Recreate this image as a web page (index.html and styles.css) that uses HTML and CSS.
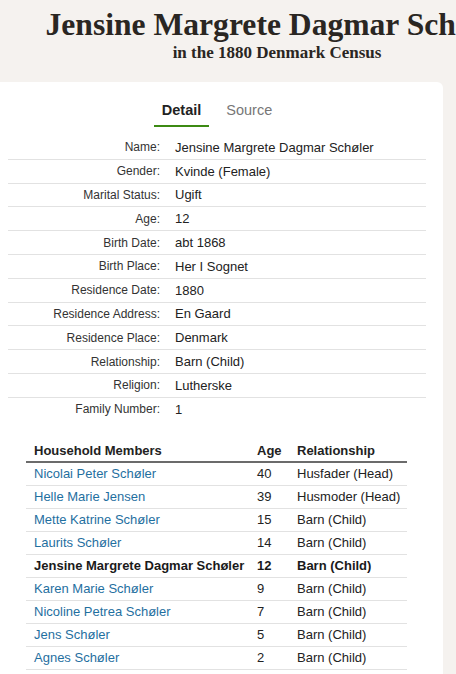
FILE: index.html
```html
<!DOCTYPE html>
<html>
<head>
<meta charset="utf-8">
<link rel="stylesheet" href="styles.css">
</head>
<body>
<header class="page-head">
  <h1 class="title">Jensine Margrete Dagmar Schøler</h1>
  <h2 class="subtitle">in the 1880 Denmark Census</h2>
</header>
<main class="card">
  <nav class="tabs">
    <span class="tab active">Detail</span>
    <span class="tab">Source</span>
  </nav>
  <dl class="details">
    <div class="row"><dt>Name:</dt><dd>Jensine Margrete Dagmar Schøler</dd></div>
    <div class="row"><dt>Gender:</dt><dd>Kvinde (Female)</dd></div>
    <div class="row"><dt>Marital Status:</dt><dd>Ugift</dd></div>
    <div class="row"><dt>Age:</dt><dd>12</dd></div>
    <div class="row"><dt>Birth Date:</dt><dd>abt 1868</dd></div>
    <div class="row"><dt>Birth Place:</dt><dd>Her I Sognet</dd></div>
    <div class="row"><dt>Residence Date:</dt><dd>1880</dd></div>
    <div class="row"><dt>Residence Address:</dt><dd>En Gaard</dd></div>
    <div class="row"><dt>Residence Place:</dt><dd>Denmark</dd></div>
    <div class="row"><dt>Relationship:</dt><dd>Barn (Child)</dd></div>
    <div class="row"><dt>Religion:</dt><dd>Lutherske</dd></div>
    <div class="row"><dt>Family Number:</dt><dd>1</dd></div>
  </dl>
  <table class="household">
    <thead>
      <tr><th class="c-name">Household Members</th><th class="c-age">Age</th><th class="c-rel">Relationship</th></tr>
    </thead>
    <tbody>
      <tr><td><a href="#">Nicolai Peter Schøler</a></td><td>40</td><td>Husfader (Head)</td></tr>
      <tr><td><a href="#">Helle Marie Jensen</a></td><td>39</td><td>Husmoder (Head)</td></tr>
      <tr><td><a href="#">Mette Katrine Schøler</a></td><td>15</td><td>Barn (Child)</td></tr>
      <tr><td><a href="#">Laurits Schøler</a></td><td>14</td><td>Barn (Child)</td></tr>
      <tr class="self"><td>Jensine Margrete Dagmar Schøler</td><td>12</td><td>Barn (Child)</td></tr>
      <tr><td><a href="#">Karen Marie Schøler</a></td><td>9</td><td>Barn (Child)</td></tr>
      <tr><td><a href="#">Nicoline Petrea Schøler</a></td><td>7</td><td>Barn (Child)</td></tr>
      <tr><td><a href="#">Jens Schøler</a></td><td>5</td><td>Barn (Child)</td></tr>
      <tr><td><a href="#">Agnes Schøler</a></td><td>2</td><td>Barn (Child)</td></tr>
    </tbody>
  </table>
</main>
</body>
</html>
```
FILE: styles.css
```css
html, body {
  margin: 0;
  padding: 0;
}
body {
  background: #f5f2ef;
  font-family: "Liberation Sans", Arial, sans-serif;
  color: #2b2b2b;
  overflow: hidden;
  width: 456px;
}
.page-head {
  width: 554px;
  height: 82px;
  text-align: center;
  padding-top: 8px;
  box-sizing: border-box;
  white-space: nowrap;
}
.title {
  margin: 0;
  font-family: "Liberation Serif", "Times New Roman", serif;
  font-weight: bold;
  font-size: 31.6px;
  line-height: 34px;
  color: #2a2622;
}
.subtitle {
  margin: 0;
  font-family: "Liberation Serif", "Times New Roman", serif;
  font-weight: bold;
  font-size: 17px;
  line-height: 22px;
  color: #2a2622;
}
.card {
  background: #fff;
  width: 443px;
  min-height: 600px;
  border-radius: 0 6px 0 0;
  padding: 18px 17px 0 8px;
  box-sizing: border-box;
}
.tabs {
  display: flex;
  justify-content: center;
  gap: 9px;
}
.tab {
  font-size: 14.5px;
  line-height: 20px;
  padding: 0 8px 5px;
  color: #777;
  border-bottom: 2px solid transparent;
}
.tab.active {
  color: #222;
  font-weight: bold;
  border-bottom-color: #3c8a13;
}
.details {
  margin: 9px 0 0;
}
.row {
  display: flex;
  align-items: center;
  height: 22.8px;
  border-bottom: 1px solid #e2e2e2;
}
.row:last-child {
  border-bottom: none;
}
.row dt {
  width: 152px;
  text-align: right;
  font-size: 12px;
  color: #333;
}
.row dd {
  margin: 0 0 0 15px;
  font-size: 13px;
  color: #222;
}
.household {
  margin: 20px 0 0 18px;
  width: 381px;
  border-collapse: collapse;
  font-size: 13px;
}
.household th {
  text-align: left;
  font-weight: bold;
  color: #222;
  height: 20px;
  padding: 0 0 0 8px;
  border-bottom: 2px solid #6b6b6b;
  vertical-align: middle;
}
.household td {
  height: 22px;
  padding: 0 0 0 8px;
  border-bottom: 1px solid #e2e2e2;
  color: #222;
}
.c-name { width: 215px; }
.c-age { width: 32px; }
.household a {
  color: #1f6f9f;
  text-decoration: none;
}
.household .self td {
  font-weight: bold;
  color: #1a1a1a;
}
```
